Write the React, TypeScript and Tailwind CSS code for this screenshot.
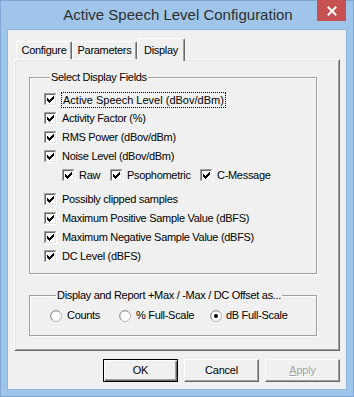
import React from "react";

const FONT = { fontFamily: '"Liberation Sans", Arial, sans-serif' };

function CheckBox({ checked = true }: { checked?: boolean }) {
  return (
    <svg width="13" height="13" viewBox="0 0 13 13" shapeRendering="crispEdges" className="shrink-0">
      <rect x="0" y="0" width="13" height="13" fill="#ffffff" />
      <rect x="0" y="0" width="12" height="1" fill="#a0a0a0" />
      <rect x="0" y="0" width="1" height="12" fill="#a0a0a0" />
      <rect x="1" y="1" width="10" height="1" fill="#696969" />
      <rect x="1" y="1" width="1" height="10" fill="#696969" />
      <rect x="1" y="11" width="11" height="1" fill="#e3e3e3" />
      <rect x="11" y="1" width="1" height="11" fill="#e3e3e3" />
      {checked && (
        <g fill="#000000">
          <rect x="3" y="5" width="1" height="3" />
          <rect x="4" y="6" width="1" height="3" />
          <rect x="5" y="7" width="1" height="3" />
          <rect x="6" y="6" width="1" height="3" />
          <rect x="7" y="5" width="1" height="3" />
          <rect x="8" y="4" width="1" height="3" />
          <rect x="9" y="3" width="1" height="3" />
        </g>
      )}
    </svg>
  );
}

function Radio({ checked = false }: { checked?: boolean }) {
  return (
    <svg width="12" height="12" viewBox="0 0 12 12" className="shrink-0">
      <circle cx="6" cy="6" r="5.5" fill="#ffffff" stroke="#b4b4b4" strokeWidth="1" />
      <path d="M2.3 9.7 A5 5 0 0 1 9.7 2.3" fill="none" stroke="#9a9a9a" strokeWidth="1" />
      {checked && <circle cx="6" cy="6" r="2" fill="#000000" />}
    </svg>
  );
}

function Row({ label, first = false }: { label: string; first?: boolean }) {
  return (
    <div className="flex h-[19px] items-center">
      <CheckBox />
      {first ? (
        <span className="ml-[4px] border border-dotted border-black px-[1px] text-[11px] leading-[14px] text-black">
          {label}
        </span>
      ) : (
        <span className="ml-[5px] text-[11px] leading-[13px] tracking-[-0.3px] text-black">{label}</span>
      )}
    </div>
  );
}

function Group({ title, children, className = "" }: { title: string; children: React.ReactNode; className?: string }) {
  return (
    <div
      className={`flex w-[288px] flex-col border border-[#a0a0a0] shadow-[inset_1px_1px_0_#ffffff,1px_1px_0_#ffffff] ${className}`}
    >
      <div className="-mt-[7px] ml-[6px] w-fit bg-[#f0f0f0] px-[1px] text-[11px] leading-[13px] tracking-[-0.3px] text-black">
        {title}
      </div>
      {children}
    </div>
  );
}

function Button({ children, isDefault = false, disabled = false }: { children: React.ReactNode; isDefault?: boolean; disabled?: boolean }) {
  return (
    <div
      className={`flex h-[23px] w-[75px] items-center justify-center bg-[#f0f0f0] text-[11px] tracking-[-0.2px] ${
        isDefault
          ? "border border-black shadow-[inset_1px_1px_0_#ffffff,inset_-1px_-1px_0_#696969,inset_-2px_-2px_0_#a0a0a0]"
          : "border border-t-white border-l-white border-r-[#696969] border-b-[#696969] shadow-[inset_-1px_-1px_0_#a0a0a0]"
      } ${disabled ? "text-[#a0a0a0] [text-shadow:1px_1px_0_#ffffff]" : "text-black"}`}
    >
      {children}
    </div>
  );
}

export default function App() {
  return (
    <div
      className="flex h-[397px] w-[354px] flex-col border border-[#7fa8d4] bg-[#9fc6ea]"
      style={FONT}
    >
      {/* Title bar */}
      <div className="grid h-[29px] grid-cols-[1fr_auto_1fr]">
        <div />
        <div className="pl-[2px] pt-[5px] text-[15px] leading-[18px] text-[#2e2e2e]">Active Speech Level Configuration</div>
        <div className="flex justify-end pr-[7px]">
          <div className="-mt-px flex h-[21px] w-[29px] items-center justify-center bg-[#c75050]">
            <svg width="10" height="10" viewBox="0 0 10 10">
              <path d="M1.5 1.5 L8.5 8.5 M8.5 1.5 L1.5 8.5" stroke="#ffffff" strokeWidth="2" strokeLinecap="square" />
            </svg>
          </div>
        </div>
      </div>

      {/* Client area */}
      <div className="mx-[7px] flex h-[359px] flex-col bg-[#f0f0f0] pl-[6px] pt-[8px] shadow-[0_0_0_1px_#8fb5dd]">
        {/* Tabs */}
        <div className="flex h-[21px] items-end pl-[2px] text-[11px] tracking-[-0.3px] text-black">
          <div className="flex h-[18px] w-[56px] items-center justify-center rounded-t-[2px] border-l border-t border-r border-l-white border-t-white border-r-[#696969] shadow-[inset_-1px_0_0_#a0a0a0]">
            Configure
          </div>
          <div className="flex h-[18px] w-[65px] items-center justify-center rounded-t-[2px] border-l border-t border-r border-l-white border-t-white border-r-[#696969] shadow-[inset_-1px_0_0_#a0a0a0]">
            Parameters
          </div>
          <div className="relative z-10 -mb-[2px] flex h-[23px] w-[48px] items-start justify-center rounded-t-[2px] border-l border-t border-r border-l-white border-t-white border-r-[#696969] bg-[#f0f0f0] pt-[3px] shadow-[inset_-1px_0_0_#a0a0a0]">
            Display
          </div>
        </div>

        {/* Panel */}
        <div className="flex h-[292px] w-[326px] flex-col border border-t-white border-l-white border-r-[#696969] border-b-[#696969] pl-[14px] pt-[17px] shadow-[inset_1px_1px_0_#e3e3e3,inset_-1px_-1px_0_#a0a0a0]">
          <Group title="Select Display Fields" className="pb-[7px] pl-[14px]">
            <div className="mt-[6px] flex flex-col">
              <Row first label="Active Speech Level (dBov/dBm)" />
              <Row label="Activity Factor (%)" />
              <Row label="RMS Power (dBov/dBm)" />
              <Row label="Noise Level (dBov/dBm)" />
              <div className="flex h-[19px] items-center pl-[18px] text-[11px] leading-[13px] tracking-[-0.3px] text-black">
                <div className="flex w-[48px] items-center">
                  <CheckBox />
                  <span className="ml-[4px]">Raw</span>
                </div>
                <div className="flex w-[90px] items-center">
                  <CheckBox />
                  <span className="ml-[4px]">Psophometric</span>
                </div>
                <div className="flex items-center">
                  <CheckBox />
                  <span className="ml-[4px]">C-Message</span>
                </div>
              </div>
              <div className="mt-[5px] flex flex-col">
                <Row label="Possibly clipped samples" />
                <Row label="Maximum Positive Sample Value (dBFS)" />
                <Row label="Maximum Negative Sample Value (dBFS)" />
                <Row label="DC Level (dBFS)" />
              </div>
            </div>
          </Group>

          <Group title="Display and Report +Max / -Max / DC Offset as..." className="mt-[21px] pb-[10px] pl-[20px]">
            <div className="mt-[4px] flex h-[19px] items-center text-[11px] leading-[13px] tracking-[-0.3px] text-black">
              <div className="flex w-[69px] items-center">
                <Radio />
                <span className="ml-[5px]">Counts</span>
              </div>
              <div className="flex w-[91px] items-center">
                <Radio />
                <span className="ml-[5px]">% Full-Scale</span>
              </div>
              <div className="flex items-center">
                <Radio checked />
                <span className="ml-[4px]">dB Full-Scale</span>
              </div>
            </div>
          </Group>
        </div>

        {/* Buttons */}
        <div className="mt-[8px] flex justify-end gap-[6px] pr-[6px]">
          <Button isDefault>OK</Button>
          <Button>Cancel</Button>
          <Button disabled>
            <span>
              <span className="underline">A</span>pply
            </span>
          </Button>
        </div>
      </div>
    </div>
  );
}
